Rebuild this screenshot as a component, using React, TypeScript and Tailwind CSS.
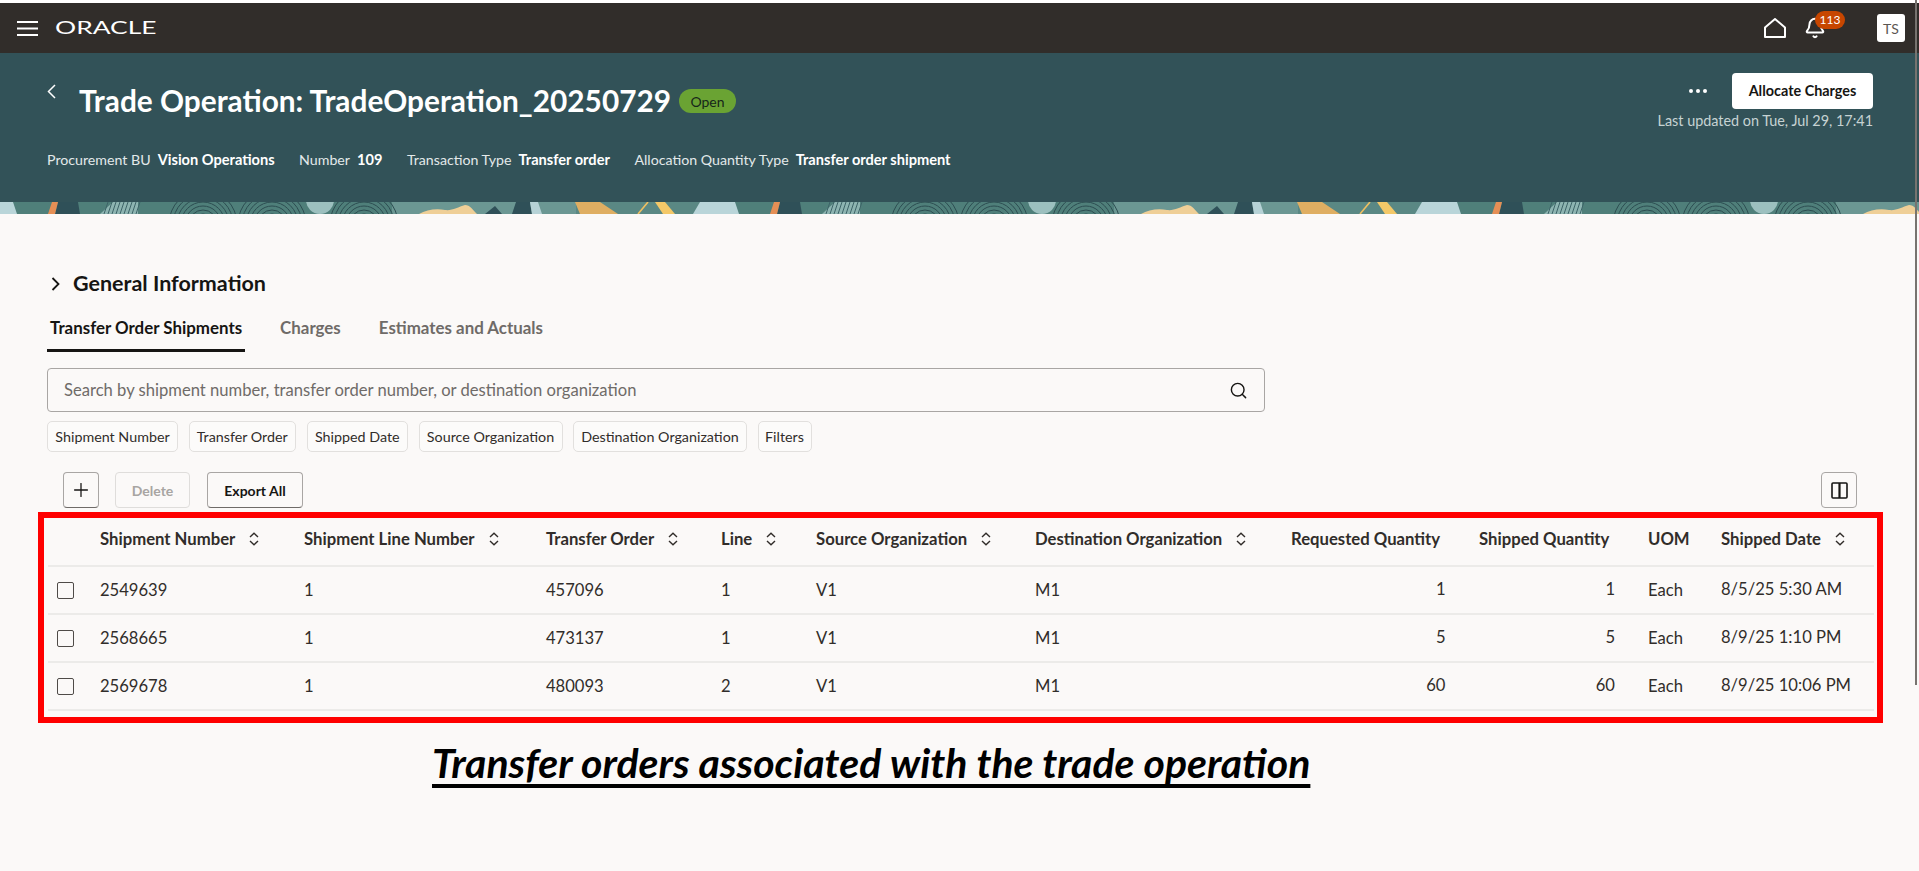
import { Bell, Plus, Search } from "lucide-react";

const rows = [
  { shipment: "2549639", line: "1", order: "457096", orderLine: "1", qty: "1", date: "8/5/25 5:30 AM" },
  { shipment: "2568665", line: "1", order: "473137", orderLine: "1", qty: "5", date: "8/9/25 1:10 PM" },
  { shipment: "2569678", line: "1", order: "480093", orderLine: "2", qty: "60", date: "8/9/25 10:06 PM" },
];

const meta = [
  { label: "Procurement BU", value: "Vision Operations" },
  { label: "Number", value: "109" },
  { label: "Transaction Type", value: "Transfer order" },
  { label: "Allocation Quantity Type", value: "Transfer order shipment" },
];

const chips = [
  { label: "Shipment Number", width: "w-[131px]" },
  { label: "Transfer Order", width: "w-[107.5px]" },
  { label: "Shipped Date", width: "w-[101.5px]" },
  { label: "Source Organization", width: "w-[144px]" },
  { label: "Destination Organization", width: "w-[174px]" },
  { label: "Filters", width: "w-[54px]" },
];

function SortIcon() {
  return (
    <svg width="12" height="14" viewBox="0 0 12 14" fill="none" stroke="#312d2a" strokeWidth="1.4" className="shrink-0">
      <path d="M2 5 6 1.2 10 5" />
      <path d="M2 9 6 12.8 10 9" />
    </svg>
  );
}

// repeating strip under the page header
function Banner() {
  const arcs = [203, 272, 364];
  const radii = [6, 10, 14, 18, 22, 26, 30, 34];
  return (
    <svg className="block h-[12px] w-full" aria-hidden="true">
      <defs>
        <pattern id="strip" width="722" height="12" patternUnits="userSpaceOnUse">
          <rect width="722" height="12" fill="#4f7f7a" />
          <rect x="392" width="184" height="12" fill="#6b9793" />
          <rect x="576" width="146" height="12" fill="#5a8884" />
          <path d="M0 0H13L17 12H0Z" fill="#b9d5d9" />
          <path d="M700 0H722V12H693Z" fill="#b9d5d9" />
          <path d="M58 0H78L80 12H55Z" fill="#2f5058" />
          <path d="M52 0H58L55 12H48Z" fill="#e58f55" />
          <path d="M113 0H138V12H100Z" fill="#8db4b1" />
          {[104, 108, 112, 116, 120, 124, 128, 132, 136].map((x) => (
            <path key={x} d={`M${x + 4} 0 ${x} 12`} stroke="#3d6468" strokeWidth="1" />
          ))}
          {arcs.map((cx) =>
            radii.map((r) => (
              <circle key={`${cx}-${r}`} cx={cx} cy="22" r={r} fill="none" stroke="#2b4c50" strokeWidth="1" />
            )),
          )}
          <circle cx="320" cy="-2" r="14" fill="#9cc0bf" />
          <path d="M419 12C426 8 436 6 445 8 452 9 458 5 465 3 470 3 473 8 477 12Z" fill="#efcf97" />
          <path d="M485 12 495 4 502 12Z" fill="#2f5058" />
          <path d="M516 0H530L532 12H512Z" fill="#2f5058" />
          <path d="M530 0H538L542 12H532Z" fill="#b6d2d6" />
          <path d="M575 0H600L618 12H580Z" fill="#dfae62" />
          <path d="M638 12 648 0" stroke="#f0c060" strokeWidth="1.6" />
          <path d="M655 0H665L675 12H663Z" fill="#f3c868" />
        </pattern>
      </defs>
      <rect width="100%" height="12" fill="url(#strip)" />
    </svg>
  );
}

export default function App() {
  return (
    <div className="relative h-[871px] overflow-hidden bg-white pt-[3px] font-['Lato',sans-serif] text-[#312d2a]">
      {/* Top bar */}
      <header className="flex h-[50px] items-center bg-[#312d2a] pl-[17px] pr-[14px]">
        <svg width="21" height="15" viewBox="0 0 21 15" stroke="#fff" strokeWidth="2" className="mt-[1px] shrink-0">
          <path d="M0 1h21M0 7.5h21M0 14h21" />
        </svg>
        <span className="ml-[17px] mt-[1px] w-[101px] origin-left scale-x-[1.6] text-[16.5px] leading-none text-white">ORACLE</span>
        <div className="ml-auto flex items-center">
          <svg width="22" height="20" viewBox="0 0 22 20" fill="none" stroke="#fff" strokeWidth="2" strokeLinejoin="round">
            <path d="M1 19V9.5L11 1l10 8.5V19Z" />
          </svg>
          <div className="relative ml-[18px]">
            <Bell size={22} color="#fff" strokeWidth={2.2} />
            <span className="absolute -top-[6px] left-[11px] flex h-[18px] w-[30px] items-center justify-center rounded-full bg-[#c74600] text-[12px] text-white">
              113
            </span>
          </div>
          <div className="ml-[51px] flex h-[28px] w-[28px] items-center justify-center rounded-[3px] bg-white text-[14px] text-[#5b5652]">
            TS
          </div>
        </div>
      </header>

      {/* Page header */}
      <section className="flex h-[149px] justify-between bg-[#325258] pl-[47px] pr-[46px] text-white">
        <div>
          <div className="mt-[30px] flex h-[36px] items-center">
            <svg width="9" height="15" viewBox="0 0 9 15" fill="none" stroke="#fff" strokeWidth="1.5" className="mb-[19px] shrink-0">
              <path d="M8 1 1.5 7.5 8 14" />
            </svg>
            <h1 className="ml-[23px] text-[29.8px] font-bold leading-[36px]">Trade Operation: TradeOperation_20250729</h1>
            <span className="ml-[8px] flex h-[24px] w-[57px] items-center justify-center rounded-full bg-[#6aa333] text-[14px] text-[#16271a]">
              Open
            </span>
          </div>
          <div className="mt-[30px] flex h-[22px] items-center gap-[24.5px] leading-[22px]">
            {meta.map((m) => (
              <div key={m.label} className="flex items-baseline gap-[7px]">
                <span className="text-[14.2px] text-[#e3e9ea]">{m.label}</span>
                <span className="text-[14.6px] font-bold">{m.value}</span>
              </div>
            ))}
          </div>
        </div>
        <div className="pt-[20px]">
          <div className="flex items-center justify-end">
            <div className="mr-[25px] flex gap-[3px]">
              <span className="h-[4px] w-[4px] rounded-full bg-white" />
              <span className="h-[4px] w-[4px] rounded-full bg-white" />
              <span className="h-[4px] w-[4px] rounded-full bg-white" />
            </div>
            <button className="h-[36px] w-[141px] rounded-[4px] bg-white text-[14.4px] font-bold text-[#161513]">
              Allocate Charges
            </button>
          </div>
          <p className="text-right text-[14.4px] leading-[24px] text-[#c6d2d3]">Last updated on Tue, Jul 29, 17:41</p>
        </div>
      </section>
      <Banner />

      {/* Content */}
      <main className="h-[657px] bg-[#fbf9f8] pl-[47px] pt-[56px]">
        <div className="flex h-[28px] items-center">
          <svg width="9" height="14" viewBox="0 0 9 14" fill="none" stroke="#161513" strokeWidth="1.8" className="ml-[4px] shrink-0">
            <path d="M1.5 1 7.5 7 1.5 13" />
          </svg>
          <h2 className="ml-[13px] pb-[2px] text-[21.5px] font-bold text-[#161513]">General Information</h2>
        </div>

        <div className="mt-[10px] flex h-[44px] gap-[32px] text-[16.9px] leading-[39px]">
          <div className="border-b-[3px] border-[#161513] px-[3px] font-bold text-[#161513]">Transfer Order Shipments</div>
          <div className="px-[3px] font-bold text-[#6f6b68]">Charges</div>
          <div className="px-[3px] font-bold text-[#6f6b68]">Estimates and Actuals</div>
        </div>

        <div className="mt-[16px] flex h-[44px] w-[1218px] items-center justify-between rounded-[4px] border border-[#a9a6a4] pl-[16px] pr-[16px]">
          <span className="text-[16.6px] text-[#6f6b68]">Search by shipment number, transfer order number, or destination organization</span>
          <Search size={19} color="#161513" strokeWidth={1.8} />
        </div>

        <div className="mt-[9px] flex gap-[10.5px]">
          {chips.map((chip) => (
            <button key={chip.label} className={`h-[31px] rounded-[5px] border border-[#e2e0de] bg-[#fcfbfa] text-center text-[14.3px] text-[#312d2a] ${chip.width}`}>
              {chip.label}
            </button>
          ))}
        </div>

        <div className="ml-[16px] mt-[20px] flex h-[36px] w-[1794px] justify-between">
          <div className="flex gap-[16px]">
            <button className="flex h-[36px] w-[36px] items-center justify-center rounded-[4px] border border-[#a9a6a4] border-b-[#6f6b68]">
              <Plus size={22} color="#161513" strokeWidth={1.4} />
            </button>
            <button className="h-[36px] w-[75px] rounded-[4px] border border-[#dfdddb] text-[14px] font-bold text-[#a8a5a2]">Delete</button>
            <button className="ml-[1px] h-[36px] w-[96px] rounded-[4px] border border-[#a9a6a4] border-b-[#6f6b68] text-[14px] font-bold text-[#161513]">
              Export All
            </button>
          </div>
          <button className="flex h-[36px] w-[36px] items-center justify-center rounded-[4px] border border-[#a9a6a4]">
            <svg width="17" height="17" viewBox="0 0 17 17" fill="none" stroke="#161513" strokeWidth="1.6">
              <rect x="1" y="1" width="15" height="15" rx="1" />
              <path d="M8.5 1v15" strokeWidth="2.2" />
            </svg>
          </button>
        </div>

        {/* Table, boxed in red as in the annotated screenshot */}
        <div className="-ml-[9px] mt-[4px] h-[211px] w-[1845px] border-[6px] border-[#ff0000] pl-[4px]">
          <table className="w-[1826px] table-fixed border-collapse text-[16.6px]">
            <colgroup>
              <col className="w-[52px]" />
              <col className="w-[204px]" />
              <col className="w-[242px]" />
              <col className="w-[175px]" />
              <col className="w-[95px]" />
              <col className="w-[219px]" />
              <col className="w-[256px]" />
              <col className="w-[188px]" />
              <col className="w-[169px]" />
              <col className="w-[73px]" />
              <col className="w-[153px]" />
            </colgroup>
            <thead>
              <tr className="h-[48px] border-b-2 border-[#ecebe9] text-left text-[16.7px]">
                <th />
                <th className="pb-[4px] font-bold"><span className="flex items-center gap-[13px]">Shipment Number<SortIcon /></span></th>
                <th className="pb-[4px] font-bold"><span className="flex items-center gap-[13px]">Shipment Line Number<SortIcon /></span></th>
                <th className="pb-[4px] font-bold"><span className="flex items-center gap-[13px]">Transfer Order<SortIcon /></span></th>
                <th className="pb-[4px] font-bold"><span className="flex items-center gap-[13px]">Line<SortIcon /></span></th>
                <th className="pb-[4px] font-bold"><span className="flex items-center gap-[13px]">Source Organization<SortIcon /></span></th>
                <th className="pb-[4px] font-bold"><span className="flex items-center gap-[13px]">Destination Organization<SortIcon /></span></th>
                <th className="pb-[4px] font-bold">Requested Quantity</th>
                <th className="pb-[4px] font-bold">Shipped Quantity</th>
                <th className="pb-[4px] font-bold">UOM</th>
                <th className="pb-[4px] font-bold"><span className="flex items-center gap-[13px]">Shipped Date<SortIcon /></span></th>
              </tr>
            </thead>
            <tbody>
              {rows.map((row) => (
                <tr key={row.shipment} className="h-[48px] border-b-2 border-[#ecebe9]">
                  <td className="pl-[9px]">
                    <div className="h-[17px] w-[17px] rounded-[2px] border-[1.5px] border-[#4f4b48]" />
                  </td>
                  <td>{row.shipment}</td>
                  <td>{row.line}</td>
                  <td>{row.order}</td>
                  <td>{row.orderLine}</td>
                  <td>V1</td>
                  <td>M1</td>
                  <td className="pb-[2px] pr-[33.5px] text-right">{row.qty}</td>
                  <td className="pb-[2px] pr-[33px] text-right">{row.qty}</td>
                  <td>Each</td>
                  <td className="pb-[2px]">{row.date}</td>
                </tr>
              ))}
            </tbody>
          </table>
        </div>

        <p className="ml-[385px] mt-[16px] text-[41px] font-bold italic leading-[48px] text-black underline decoration-[4px] underline-offset-[6px] [text-decoration-skip-ink:none]">
          Transfer orders associated with the trade operation
        </p>
      </main>

      {/* Page scrollbar */}
      <div className="absolute right-[2px] top-0 h-[685px] w-[2px] bg-[#77736f]" />
    </div>
  );
}
